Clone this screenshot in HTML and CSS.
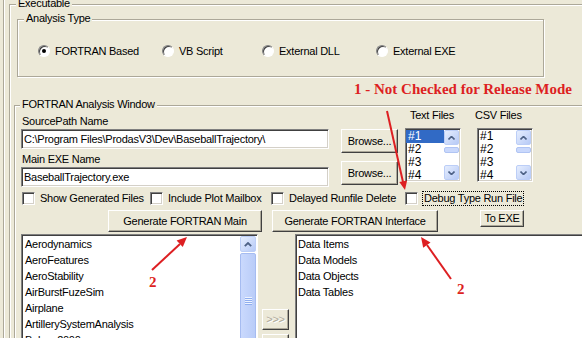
FILE: index.html
```html
<!DOCTYPE html>
<html>
<head>
    <title>Executable</title>
    <link rel="stylesheet" href="styles.css">
</head>
<body>
    <div class="win">
        <div class="group exec">
            <div class="cap">Executable</div>

            <div class="group analysis">
                <div class="cap">Analysis Type</div>
                <div class="opts">
                    <label class="opt"><span class="radio on"></span>FORTRAN Based</label>
                    <label class="opt"><span class="radio"></span>VB Script</label>
                    <label class="opt"><span class="radio"></span>External DLL</label>
                    <label class="opt"><span class="radio"></span>External EXE</label>
                </div>
            </div>

            <div class="group fortran">
                <div class="cap">FORTRAN Analysis Window</div>
                <div class="top">
                    <div class="paths">
                        <div class="lbl">SourcePath Name</div>
                        <div class="field">C:\Program Files\ProdasV3\Dev\BaseballTrajectory\</div>
                        <div class="lbl">Main EXE Name</div>
                        <div class="field">BaseballTrajectory.exe</div>
                    </div>
                    <div class="browse">
                        <button class="btn browse-btn">Browse...</button>
                        <button class="btn browse-btn">Browse...</button>
                    </div>
                    <div class="files tf">
                        <div class="flbl">Text Files</div>
                        <div class="minilist">
                            <div class="mitems">
                                <div class="sel">#1</div>
                                <div>#2</div>
                                <div>#3</div>
                                <div>#4</div>
                            </div>
                            <div class="mscroll">
                                <span class="sbtn"><svg width="7" height="4"><polyline points="0.5,3.5 3.5,0.5 6.5,3.5" fill="none" stroke="#4D6185" stroke-width="1.6"/></svg></span>
                                <span class="mthumb"></span>
                                <span class="mgap"></span>
                                <span class="sbtn"><svg width="7" height="4"><polyline points="0.5,0.5 3.5,3.5 6.5,0.5" fill="none" stroke="#4D6185" stroke-width="1.6"/></svg></span>
                            </div>
                        </div>
                    </div>
                    <div class="files csv">
                        <div class="flbl">CSV Files</div>
                        <div class="minilist">
                            <div class="mitems">
                                <div>#1</div>
                                <div>#2</div>
                                <div>#3</div>
                                <div>#4</div>
                            </div>
                            <div class="mscroll">
                                <span class="sbtn"><svg width="7" height="4"><polyline points="0.5,3.5 3.5,0.5 6.5,3.5" fill="none" stroke="#4D6185" stroke-width="1.6"/></svg></span>
                                <span class="mthumb"></span>
                                <span class="mgap"></span>
                                <span class="sbtn"><svg width="7" height="4"><polyline points="0.5,0.5 3.5,3.5 6.5,0.5" fill="none" stroke="#4D6185" stroke-width="1.6"/></svg></span>
                            </div>
                        </div>
                    </div>
                </div>

                <div class="checks">
                    <label class="chk"><span class="box"></span>Show Generated Files</label>
                    <label class="chk"><span class="box"></span>Include Plot Mailbox</label>
                    <label class="chk"><span class="box"></span>Delayed Runfile Delete</label>
                    <label class="chk debug"><span class="box"></span><span class="focus">Debug Type Run File</span></label>
                </div>

                <div class="btns">
                    <button class="btn gen-main">Generate FORTRAN Main</button>
                    <button class="btn gen-int">Generate FORTRAN Interface</button>
                    <button class="btn to-exe">To EXE</button>
                </div>

                <div class="lists">
                    <div class="biglist left-list">
                        <div class="items">
                            <div>Aerodynamics</div>
                            <div>AeroFeatures</div>
                            <div>AeroStability</div>
                            <div>AirBurstFuzeSim</div>
                            <div>Airplane</div>
                            <div>ArtillerySystemAnalysis</div>
                            <div>Balons2000</div>
                        </div>
                        <div class="vscroll">
                            <span class="sbtn big"><svg width="8" height="5"><polyline points="0.8,4.2 4,1 7.2,4.2" fill="none" stroke="#4D6185" stroke-width="1.8"/></svg></span>
                            <span class="thumb"><span class="grip"></span></span>
                        </div>
                    </div>
                    <div class="mid">
                        <button class="btn move" disabled>&gt;&gt;&gt;</button>
                        <button class="btn move" disabled>&lt;&lt;&lt;</button>
                    </div>
                    <div class="biglist right-list">
                        <div class="items">
                            <div>Data Items</div>
                            <div>Data Models</div>
                            <div>Data Objects</div>
                            <div>Data Tables</div>
                        </div>
                    </div>
                </div>
            </div>
        </div>
    </div>

    <!-- annotations drawn over the dialog -->
    <div class="note">1 - Not Checked for Release Mode</div>
    <div class="num num-left">2</div>
    <div class="num num-right">2</div>
    <svg class="marks" width="582" height="338">
        <g stroke="#DD1F22" stroke-width="2" fill="none">
            <line x1="387" y1="111" x2="403" y2="182"/>
            <line x1="152" y1="270" x2="180" y2="244"/>
            <line x1="451" y1="279" x2="427" y2="245"/>
        </g>
        <g fill="#DD1F22">
            <polygon points="405,190 407.1,180.4 399.3,182"/>
            <polygon points="187,237 182.8,247.1 176.6,240.6"/>
            <polygon points="421,237 430.5,242.5 423.2,247.7"/>
        </g>
    </svg>
</body>
</html>
```

FILE: styles.css
```css
* {
    box-sizing: border-box;
}
body {
    margin: 0;
    width: 582px;
    height: 338px;
    overflow: hidden;
    position: relative;
    background-color: #ECE9D8;
    font-family: "Liberation Sans", Arial, sans-serif;
    font-size: 11px;
    line-height: 13px;
    letter-spacing: -0.25px;
    color: #000;
}
.win {
    height: 100%;
    margin-left: 3px;
    padding: 4px 0 0 5px;
    border-left: 1px solid #ACA899;
    box-shadow: inset 1px 0 #fff;
}

/* etched group boxes */
.group {
    border: 1px solid #ACA899;
    box-shadow: inset 1px 1px #fff, 1px 1px #fff;
}
.cap {
    display: table;
    margin: -8px 0 0 6px;
    padding: 0 2px;
    background-color: #ECE9D8;
}
.exec {
    width: 640px;
    height: 420px;
}
.analysis {
    width: 527px;
    height: 58px;
    margin: 9px 0 0 7px;
}
.opts {
    display: grid;
    grid-template-columns: 124px 100px 114px auto;
    margin: 19px 0 0 20px;
    height: 14px;
}
.opt {
    display: flex;
    align-items: center;
    gap: 5px;
}
.radio {
    position: relative;
    width: 12px;
    height: 12px;
    border-radius: 50%;
    background-color: #fff;
    border: 1px solid;
    border-color: #808080 #fff #fff #808080;
    box-shadow: inset 1px 1px #404040;
}
.radio.on::after {
    content: "";
    position: absolute;
    left: 3px;
    top: 3px;
    width: 4px;
    height: 4px;
    border-radius: 50%;
    background-color: #000;
}

.fortran {
    width: 640px;
    height: 300px;
    margin: 28px 0 0 4px;
}
.fortran .cap {
    margin-left: 5px;
}
.top {
    display: flex;
    align-items: flex-start;
}
.paths {
    margin-left: 6px;
    width: 308px;
}
.lbl {
    margin-top: 4px;
    padding-left: 1px;
}
.field {
    margin-top: 1px;
    height: 20px;
    padding: 1px 2px 0;
    line-height: 16px;
    white-space: nowrap;
    overflow: hidden;
    background-color: #fff;
    border: 1px solid;
    border-color: #808080 #fff #fff #808080;
    box-shadow: inset 1px 1px #404040, inset -1px -1px #D4D0C8;
}
.browse {
    display: flex;
    flex-direction: column;
    gap: 8px;
    margin: 18px 0 0 12px;
}
.btn {
    font: inherit;
    letter-spacing: inherit;
    color: #000;
    padding: 0;
    background-color: #ECE9D8;
    border: 1px solid;
    border-color: #fff #404040 #404040 #fff;
    box-shadow: inset -1px -1px #ACA899;
}
.browse-btn {
    width: 57px;
    height: 24px;
}
.files {
    margin-top: -2px;
}
.tf {
    margin-left: 7px;
}
.csv {
    margin-left: 16px;
}
.flbl {
    padding-left: 5px;
}
.csv .flbl {
    padding-left: 0;
    margin-left: -2px;
}
.minilist {
    display: flex;
    width: 56px;
    height: 54px;
    margin-top: 6px;
    padding: 1px;
    background-color: #fff;
    border: 1px solid;
    border-color: #808080 #fff #fff #808080;
    box-shadow: inset 1px 1px #404040, inset -1px -1px #D4D0C8;
    font-size: 12px;
    letter-spacing: 0;
}
.mitems {
    flex: 1;
    margin-left: -1px;
}
.mitems div {
    padding-left: 2px;
}
.mitems .sel {
    background-color: #316AC5;
    color: #fff;
}
.mscroll {
    width: 15px;
    display: flex;
    flex-direction: column;
}
.sbtn {
    display: flex;
    align-items: center;
    justify-content: center;
    height: 15px;
    border: 1px solid #BCCEF7;
    border-radius: 2px;
    background: linear-gradient(135deg, #E6EEFE, #B7CAF6);
}
.sbtn.big {
    height: 16px;
}
.mthumb {
    height: 6px;
    margin-top: 2px;
    border: 1px solid #B0C4F3;
    border-radius: 2px;
    background-color: #C9D8FC;
}
.mgap {
    flex: 1;
}

.checks {
    display: grid;
    grid-template-columns: 128px 121px 134px auto;
    margin: 4px 0 0 7px;
    height: 14px;
}
.chk {
    display: flex;
    align-items: center;
    gap: 5px;
    white-space: nowrap;
}
.box {
    width: 13px;
    height: 13px;
    background-color: #fff;
    border: 1px solid;
    border-color: #808080 #fff #fff #808080;
    box-shadow: inset 1px 1px #404040, inset -1px -1px #D4D0C8;
}
.debug {
    gap: 4px;
}
.focus {
    padding: 0 1px;
    border: 1px dotted #000;
}

.btns {
    display: flex;
    align-items: flex-start;
    margin: 5px 0 0 93px;
}
.gen-main {
    width: 154px;
    height: 22px;
}
.gen-int {
    width: 166px;
    height: 22px;
    margin-left: 10px;
}
.to-exe {
    width: 44px;
    height: 17px;
    margin-left: 42px;
}

.lists {
    display: flex;
    margin: 2px 0 0 6px;
}
.biglist {
    display: flex;
    flex-shrink: 0;
    height: 150px;
    padding: 1px 1px 0 1px;
    background-color: #fff;
    border: 1px solid;
    border-color: #808080 #fff #fff #808080;
    box-shadow: inset 1px 1px #404040;
    line-height: 16px;
}
.left-list {
    width: 237px;
}
.right-list {
    width: 400px;
}
.items {
    flex: 1;
    padding-left: 2px;
}
.right-list .items {
    padding-left: 1px;
}
.vscroll {
    width: 16px;
    display: flex;
    flex-direction: column;
    gap: 1px;
}
.thumb {
    display: flex;
    align-items: center;
    justify-content: center;
    height: 96px;
    border: 1px solid #A6BCF1;
    border-radius: 2px;
    background: linear-gradient(90deg, #CAD9FD, #B9CCF8);
}
.grip {
    width: 7px;
    height: 8px;
    background: repeating-linear-gradient(#EEF3FE 0 1px, #8FAEEF 1px 2px);
}
.mid {
    flex-shrink: 0;
    width: 37px;
    padding: 75px 0 0 4px;
    display: flex;
    flex-direction: column;
    gap: 4px;
}
.move {
    width: 27px;
    height: 21px;
    color: #ACA899;
    text-shadow: 1px 1px #fff;
}

/* red annotations */
.note {
    position: absolute;
    left: 354px;
    top: 82px;
    font-family: "Liberation Serif", "Times New Roman", serif;
    font-weight: bold;
    font-size: 15px;
    line-height: 15px;
    letter-spacing: 0;
    color: #DD1F22;
    white-space: nowrap;
}
.num {
    position: absolute;
    font-family: "Liberation Serif", "Times New Roman", serif;
    font-weight: bold;
    font-size: 15px;
    line-height: 15px;
    letter-spacing: 0;
    color: #DD1F22;
}
.num-left {
    left: 149px;
    top: 275px;
}
.num-right {
    left: 457px;
    top: 282px;
}
.marks {
    position: absolute;
    left: 0;
    top: 0;
    pointer-events: none;
}
```
